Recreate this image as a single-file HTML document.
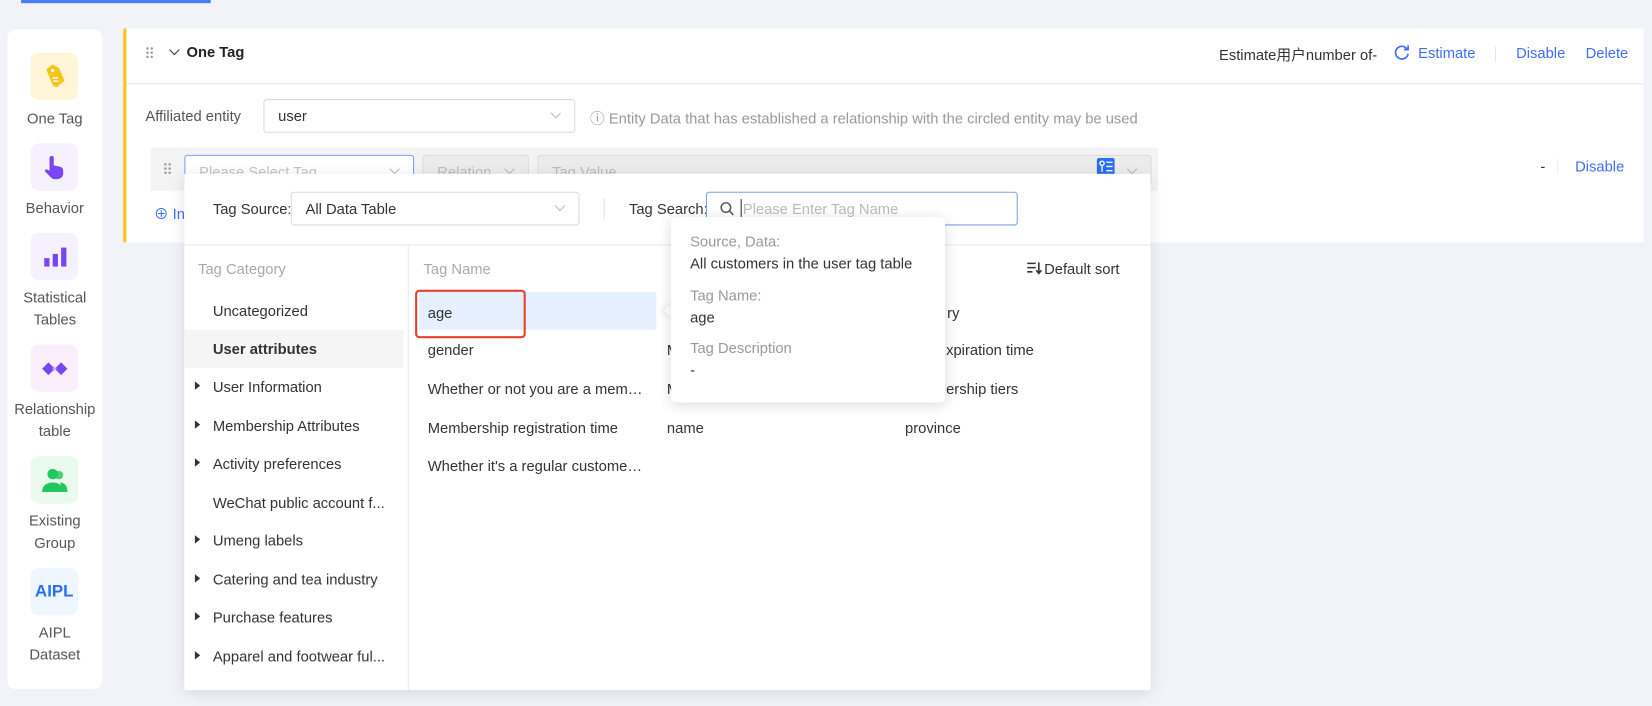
<!DOCTYPE html>
<html><head><meta charset="utf-8"><style>
*{box-sizing:border-box;margin:0;padding:0}
html,body{width:1652px;height:706px;overflow:hidden;background:#f2f3f8}
#w{position:absolute;left:0;top:0;width:1568px;height:670px;transform:scale(1.05357);transform-origin:0 0;font-family:"Liberation Sans","Noto Sans CJK SC",sans-serif;font-size:14px;color:#333}
.a{position:absolute}
.side{left:7px;top:28px;width:90px;height:626px;background:#fff;border-radius:8px}
.ic{position:absolute;left:22px;width:45px;height:45px;border-radius:8px;display:flex;align-items:center;justify-content:center}
.lb{position:absolute;left:0;width:90px;text-align:center;color:#555;font-size:14px;line-height:21px}
.card{left:117px;top:27px;width:1443px;height:203px;background:#fff;border-left:3px solid #f5c518}
.blue{color:#3d6ef5}
.sel{position:absolute;border:1px solid #dcdcdc;border-radius:3px;background:#fff;height:32px;line-height:30px;padding-left:13px;white-space:nowrap;overflow:hidden}
.chev{position:absolute;right:14px;top:9px;width:7px;height:7px;border-right:1px solid #bbb;border-bottom:1px solid #bbb;transform:rotate(45deg)}
.cat{position:absolute;left:27px;font-size:14px;color:#333}
.tri{position:absolute;left:10px;width:0;height:0;border-top:4px solid transparent;border-bottom:4px solid transparent;border-left:5px solid #333}
.g{position:absolute;font-size:14px;color:#333;white-space:nowrap}
.dots{position:absolute;width:8px;height:12px;background-image:radial-gradient(circle,#999 1.1px,transparent 1.3px);background-size:4px 4px}
</style></head><body><div id="w">
<div class="a" style="left:20px;top:0;width:180px;height:3px;background:#4a7cf6"></div>
<div class="a side">
 <div class="ic" style="top:22px;background:#fff6d9"><svg width="22" height="26" viewBox="0 0 22 26"><path d="M5 4l7-3 5 5 2 13-9 4-3-3z" fill="#f5c518" transform="rotate(-15 11 13)"/><circle cx="9" cy="7" r="1.5" fill="#fff"/><path d="M9 14h5M9.5 17h5" stroke="#fff" stroke-width="1.5"/></svg></div>
 <div class="lb" style="top:74px">One Tag</div>
 <div class="ic" style="top:108px;background:#f6f1ff"><svg width="24" height="26" viewBox="0 0 24 26"><path d="M9 2c1.5 0 2 1 2 2v7l5 1c3 .5 4 2 4 4v3c0 3-3 5-6 5h-2c-2 0-3-1-5-3l-4-4c-1-1 0-3 2-2l2 1V4c0-1 1-2 2-2z" fill="#7a45f2"/></svg></div>
 <div class="lb" style="top:159px">Behavior</div>
 <div class="ic" style="top:193px;background:#f6f1ff"><svg width="24" height="22"><rect x="2" y="12" width="5" height="8" fill="#7a45f2"/><rect x="10" y="8" width="5" height="12" fill="#7a45f2"/><rect x="18" y="2" width="5" height="18" fill="#7a45f2"/></svg></div>
 <div class="lb" style="top:244px">Statistical<br>Tables</div>
 <div class="ic" style="top:299px;background:#fbeefc"><svg width="26" height="14" viewBox="0 0 26 14"><path d="M7 1l6 6-6 6-6-6zM19 1l6 6-6 6-6-6z" fill="#7a45f2"/><path d="M11 4l4 3-4 3" fill="#c4a5ff"/></svg></div>
 <div class="lb" style="top:350px">Relationship<br>table</div>
 <div class="ic" style="top:405px;background:#eafaee"><svg width="26" height="24" viewBox="0 0 26 24"><circle cx="11" cy="6" r="5" fill="#22c55e"/><circle cx="17" cy="7" r="4" fill="#22c55e" opacity=".8"/><path d="M1 23c0-6 4-9 10-9s10 3 10 9z" fill="#22c55e"/><path d="M18 14c4 0 7 3 7 9h-4z" fill="#22c55e"/></svg></div>
 <div class="lb" style="top:456px">Existing<br>Group</div>
 <div class="ic" style="top:511px;background:#eef6ff;color:#2a6ef5;font-weight:bold;font-size:16px">AIPL</div>
 <div class="lb" style="top:562px">AIPL<br>Dataset</div>
</div>

<div class="a card">
 <div class="a" style="left:0;top:52px;width:1440px;height:1px;background:#e8e8e8"></div>
 <div class="dots" style="left:18px;top:17px"></div>
 <div class="a" style="left:42px;top:17px;width:7px;height:7px;border-right:1.5px solid #333;border-bottom:1.5px solid #333;transform:rotate(45deg)"></div>
 <div class="a" style="left:57px;top:14px;font-weight:bold;font-size:14px;color:#222">One Tag</div>
 <div class="a" style="left:1037px;top:15px;color:#333">Estimate用户number of-</div>
 <svg class="a" style="left:1203px;top:15px" width="15" height="15" viewBox="0 0 15 15"><path d="M12.5 4.5A6 6 0 1 0 13.5 9" fill="none" stroke="#3d6ef5" stroke-width="1.6"/><path d="M13.5 1v4h-4" fill="none" stroke="#3d6ef5" stroke-width="1.6"/></svg>
 <div class="a blue" style="left:1226px;top:15px">Estimate</div>
 <div class="a" style="left:1299px;top:17px;width:1px;height:14px;background:#e5e5e5"></div>
 <div class="a blue" style="left:1319px;top:15px">Disable</div>
 <div class="a blue" style="left:1385px;top:15px">Delete</div>
 <div class="a" style="left:18px;top:75px;color:#555">Affiliated entity</div>
 <div class="sel" style="left:130px;top:67px;width:296px">user<div class="chev"></div></div>
 <div class="a" style="left:440px;top:75px;color:#999">ⓘ Entity Data that has established a relationship with the circled entity may be used</div>
 <div class="a" style="left:23px;top:113px;width:956px;height:41px;background:#f3f3f3"></div>
 <div class="dots" style="left:35px;top:127px"></div>
 <div class="sel" style="left:55px;top:120px;width:218px;height:29px;border-color:#7aa0f5;color:#c4c4c4">Please Select Tag<div class="chev"></div></div>
 <div class="sel" style="left:281px;top:120px;width:101px;height:29px;background:#ececec;color:#bbb">Relation<div class="chev"></div></div>
 <div class="sel" style="left:390px;top:120px;width:583px;height:29px;background:#ececec;color:#bbb">Tag Value<div class="chev"></div></div>
 <svg class="a" style="left:921px;top:123px" width="17" height="16" viewBox="0 0 17 16"><rect width="17" height="16" rx="2" fill="#2a6ef5"/><circle cx="5" cy="5" r="2" fill="none" stroke="#fff" stroke-width="1.3"/><path d="M5 7v6M9 4h6M9 8h6M9 12h6" stroke="#fff" stroke-width="1.3"/></svg>
 <div class="a" style="left:1342px;top:123px">-</div>
 <div class="a" style="left:1358px;top:124px;width:1px;height:14px;background:#eee"></div>
 <div class="a blue" style="left:1375px;top:123px">Disable</div>
 <div class="a blue" style="left:26px;top:166px">⊕ In</div>
</div>

<div class="a" style="left:175px;top:165px;width:917px;height:490px;background:#fff;box-shadow:0 3px 14px rgba(0,0,0,.12)">
 <div class="a" style="left:27px;top:25px;color:#333">Tag Source:</div>
 <div class="sel" style="left:101px;top:17px;width:274px;height:32px">All Data Table<div class="chev"></div></div>
 <div class="a" style="left:398px;top:23px;width:1px;height:20px;background:#e0e0e0"></div>
 <div class="a" style="left:422px;top:25px">Tag Search:</div>
 <div class="sel" style="left:495px;top:17px;width:296px;height:32px;border-color:#7aa0f5;color:#bbb;padding-left:34px">Please Enter Tag Name</div>
 <svg class="a" style="left:508px;top:26px" width="14" height="14" viewBox="0 0 14 14"><circle cx="6" cy="6" r="4.5" fill="none" stroke="#555" stroke-width="1.4"/><path d="M9.3 9.3L13 13" stroke="#555" stroke-width="1.4"/></svg>
 <div class="a" style="left:528px;top:24px;width:1px;height:18px;background:#333"></div>
 <div class="a" style="left:0;top:67px;width:917px;height:1px;background:#e8e8e8"></div>
 <div class="a" style="left:212px;top:67px;width:1px;height:423px;background:#e8e8e8"></div>
 <div class="a" style="left:13px;top:82px;color:#aaa">Tag Category</div>
 <div class="cat" style="top:122px">Uncategorized</div>
 <div class="a" style="left:0;top:148px;width:208px;height:36px;background:#f5f5f5"></div>
 <div class="cat" style="top:158px;font-weight:bold">User attributes</div>
 <div class="tri" style="top:197px"></div><div class="cat" style="top:194px">User Information</div>
 <div class="tri" style="top:234px"></div><div class="cat" style="top:231px">Membership Attributes</div>
 <div class="tri" style="top:270px"></div><div class="cat" style="top:267px">Activity preferences</div>
 <div class="cat" style="top:304px">WeChat public account f...</div>
 <div class="tri" style="top:343px"></div><div class="cat" style="top:340px">Umeng labels</div>
 <div class="tri" style="top:380px"></div><div class="cat" style="top:377px">Catering and tea industry</div>
 <div class="tri" style="top:416px"></div><div class="cat" style="top:413px">Purchase features</div>
 <div class="tri" style="top:453px"></div><div class="cat" style="top:450px">Apparel and footwear ful...</div>
 <div class="a" style="left:227px;top:82px;color:#aaa">Tag Name</div>
 <svg class="a" style="left:799px;top:83px" width="16" height="13" viewBox="0 0 16 13"><path d="M1 2h8M1 6h8M1 10h5" stroke="#333" stroke-width="1.5"/><path d="M12 1v10M9.5 8.5L12 11.5 14.5 8.5" fill="none" stroke="#333" stroke-width="1.5"/></svg>
 <div class="a" style="left:816px;top:82px;color:#333">Default sort</div>
 <div class="a" style="left:223px;top:112px;width:225px;height:36px;background:#e6effd"></div>
 <div class="a" style="left:219px;top:110px;width:105px;height:46px;border:2.5px solid #e5412d;border-radius:4px"></div>
 <div class="g" style="left:231px;top:124px">age</div>
 <div class="g" style="left:724px;top:124px">ry</div>
 <div class="g" style="left:231px;top:159px">gender</div>
 <div class="g" style="left:458px;top:159px">M</div>
 <div class="g" style="left:723px;top:159px">xpiration time</div>
 <div class="g" style="left:231px;top:196px">Whether or not you are a mem…</div>
 <div class="g" style="left:458px;top:196px">M</div>
 <div class="g" style="left:723px;top:196px">ership tiers</div>
 <div class="g" style="left:231px;top:233px">Membership registration time</div>
 <div class="g" style="left:458px;top:233px">name</div>
 <div class="g" style="left:684px;top:233px">province</div>
 <div class="g" style="left:231px;top:269px">Whether it's a regular custome…</div>
</div>

<div class="a" style="left:632px;top:290px;width:10px;height:10px;background:#fff;transform:rotate(45deg);box-shadow:-2px 2px 4px rgba(0,0,0,.08)"></div>
<div class="a" style="left:637px;top:206px;width:260px;height:176px;background:#fff;border-radius:5px;box-shadow:0 2px 12px rgba(0,0,0,.15)">
 <div class="a" style="left:18px;top:15px;color:#999">Source, Data:</div>
 <div class="a" style="left:18px;top:36px">All customers in the user tag table</div>
 <div class="a" style="left:18px;top:66px;color:#999">Tag Name:</div>
 <div class="a" style="left:18px;top:87px">age</div>
 <div class="a" style="left:18px;top:116px;color:#999">Tag Description</div>
 <div class="a" style="left:18px;top:137px">-</div>
</div>
</div></body></html>
